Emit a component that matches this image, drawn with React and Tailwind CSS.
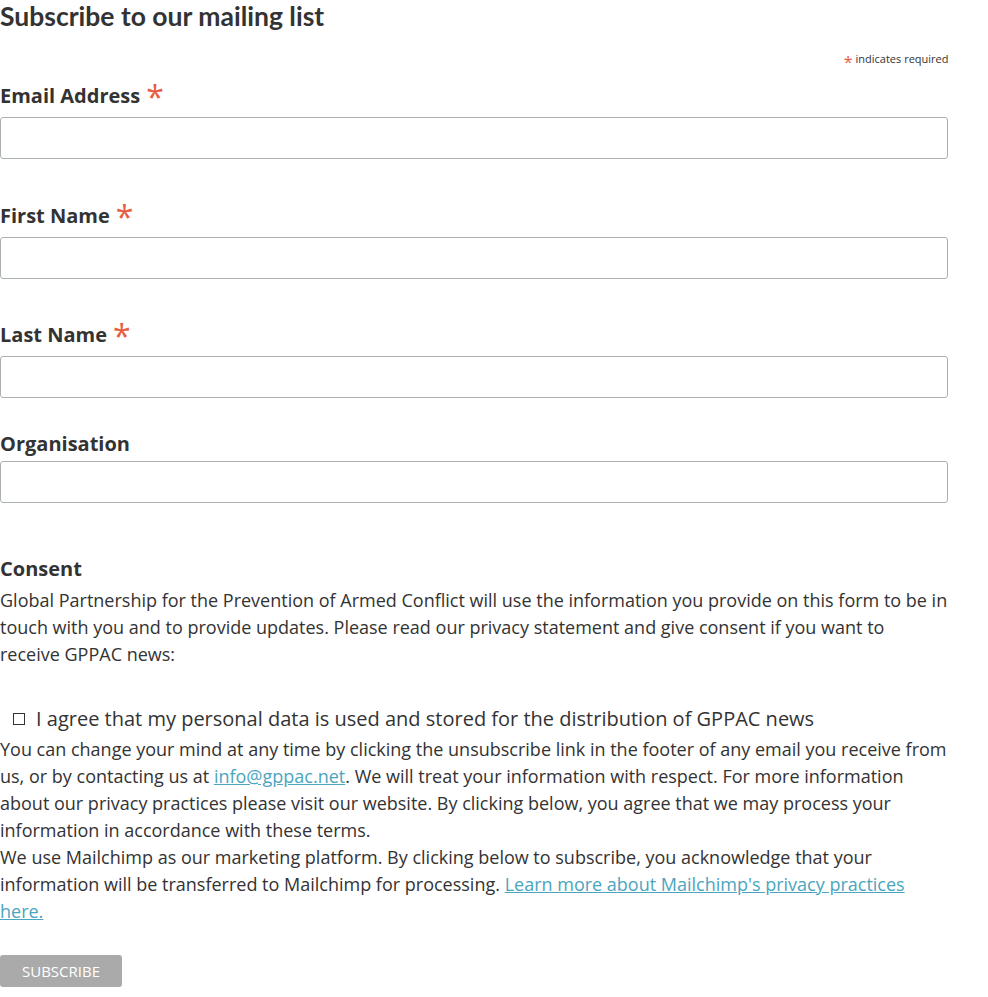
import React from "react";

const Star = () => (
  <span className="relative top-[1px] ml-[6px] text-[32px] font-normal leading-none text-[#e85c41]">*</span>
);

function Field({ label, required, labelClass, inputClass }) {
  return (
    <div className="w-[96%]">
      <div className={`flex items-center h-[27px] text-[20px] font-bold leading-[27px] ${labelClass}`}>
        <span>{label}</span>
        {required && <Star />}
      </div>
      <input
        type="text"
        className={`block w-full h-[42px] rounded-[3px] border border-[#abb0b2] bg-white px-2 outline-none ${inputClass}`}
      />
    </div>
  );
}

export default function App() {
  return (
    <div
      className="w-[988px] bg-white text-[#333333]"
      style={{ fontFamily: '"Open Sans", "Liberation Sans", sans-serif' }}
    >
      <h2
        className="text-[26.5px] font-bold leading-[32px] text-[#333333]"
        style={{ fontFamily: 'Lato, "Open Sans", sans-serif' }}
      >
        Subscribe to our mailing list
      </h2>
      <div className="mt-[18px] flex h-[18px] w-[96%] items-center justify-end text-[11px] leading-[18px]">
        <span className="relative top-[3px] mr-[3px] text-[16px] leading-none text-[#e85c41]">*</span>
        <span>indicates required</span>
      </div>

      <Field label="Email Address" required labelClass="mt-[14px]" inputClass="mt-[8px]" />
      <Field label="First Name" required labelClass="mt-[43px]" inputClass="mt-[8px]" />
      <Field label="Last Name" required labelClass="mt-[42px]" inputClass="mt-[8px]" />
      <Field label="Organisation" labelClass="mt-[32px]" inputClass="mt-[4px]" />

      <div className="mt-[52px] w-[96%]">
        <div className="text-[20px] font-bold leading-[27px]">Consent</div>
        <p className="mt-[5px] text-[18px] leading-[27px]">
          Global Partnership for the Prevention of Armed Conflict will use the information you provide on this form to be in touch with you and to provide updates. Please read our privacy statement and give consent if you want to receive GPPAC news:
        </p>
        <label className="mt-[36px] flex h-[30px] items-center text-[20px] leading-[30px]">
          <span className="ml-[13px] mr-[11px] inline-block h-[12px] w-[12px] border border-[#333333]" />
          <span>I agree that my personal data is used and stored for the distribution of GPPAC news</span>
        </label>
        <p className="mt-[2px] text-[18px] leading-[27px]">
          You can change your mind at any time by clicking the unsubscribe link in the footer of any email you receive from us, or by contacting us at{" "}
          <a href="#" className="text-[#4ba5be] underline">info@gppac.net</a>. We will treat your information with respect. For more information about our privacy practices please visit our website. By clicking below, you agree that we may process your information in accordance with these terms.
        </p>
        <p className="text-[18px] leading-[27px]">
          We use Mailchimp as our marketing platform. By clicking below to subscribe, you acknowledge that your information will be transferred to Mailchimp for processing.{" "}
          <a href="#" className="text-[#4ba5be] underline">Learn more about Mailchimp's privacy practices here.</a>
        </p>
      </div>

      <button className="mt-[30px] mb-[10px] block h-[32px] w-[122px] rounded-[3px] bg-[#aaaaaa] text-[15px] leading-[32px] text-white">
        SUBSCRIBE
      </button>
    </div>
  );
}
